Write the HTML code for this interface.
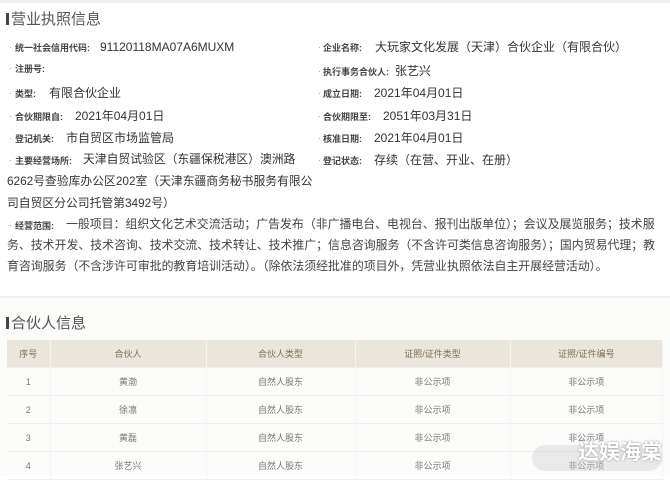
<!DOCTYPE html>
<html><head><meta charset="utf-8"><style>
body{margin:0;width:670px;height:474px;overflow:hidden;background:#fff;font-family:"Liberation Sans","Noto Sans CJK SC",sans-serif;color:#333;position:relative}
.a{position:absolute;white-space:nowrap;line-height:1}
.l{font-size:9px;font-weight:bold;color:#444}
.v{font-size:12px;color:#333}
.d{font-size:8px;color:#888}
.t{font-size:15px;color:#555}
.bar{display:inline-block;width:3px;height:12px;background:#444;margin-right:2px;vertical-align:-1px}
table{position:absolute;left:7px;top:340px;width:656px;border-collapse:collapse;font-size:9px;color:#777;table-layout:fixed}
td{text-align:center;border-right:1px solid #f4f4f4;border-bottom:1px solid #eee;height:27px;padding:0}
tr.h td{background:#ebe6db;color:#7a6f5e;height:27px}
.p{font-size:11.9px;color:#444}
</style></head><body>
<div style="position:absolute;left:0;top:0;width:670px;height:3px;background:#f1efe9"></div>
<div class="a t" style="left:6px;top:12px"><span class="bar"></span>营业执照信息</div>

<div class="a d" style="left:9px;top:44px">·</div><div class="a l" style="left:15px;top:44px">统一社会信用代码:</div><div class="a v" style="left:100px;top:41px">91120118MA07A6MUXM</div>
<div class="a d" style="left:9px;top:65px">·</div><div class="a l" style="left:15px;top:65px">注册号:</div>
<div class="a d" style="left:9px;top:90px">·</div><div class="a l" style="left:15px;top:90px">类型:</div><div class="a v" style="left:49px;top:87px">有限合伙企业</div>
<div class="a d" style="left:9px;top:113px">·</div><div class="a l" style="left:15px;top:113px">合伙期限自:</div><div class="a v" style="left:75px;top:110px">2021年04月01日</div>
<div class="a d" style="left:9px;top:135px">·</div><div class="a l" style="left:15px;top:135px">登记机关:</div><div class="a v" style="left:66px;top:132px">市自贸区市场监管局</div>
<div class="a d" style="left:9px;top:157px">·</div><div class="a l" style="left:15px;top:157px">主要经营场所:</div><div class="a v" style="left:83px;top:154px;font-size:11.8px">天津自贸试验区（东疆保税港区）澳洲路</div>
<div class="a v" style="left:7px;top:176px;font-size:11.8px">6262号查验库办公区202室（天津东疆商务秘书服务有限公</div>
<div class="a v" style="left:7px;top:198px;font-size:11.8px">司自贸区分公司托管第3492号）</div>

<div class="a d" style="left:318px;top:44px">·</div><div class="a l" style="left:323px;top:44px">企业名称:</div><div class="a v" style="left:375px;top:41px">大玩家文化发展（天津）合伙企业（有限合伙）</div>
<div class="a d" style="left:318px;top:68px">·</div><div class="a l" style="left:323px;top:68px">执行事务合伙人:</div><div class="a v" style="left:395px;top:65px">张艺兴</div>
<div class="a d" style="left:318px;top:90px">·</div><div class="a l" style="left:323px;top:90px">成立日期:</div><div class="a v" style="left:374px;top:87px">2021年04月01日</div>
<div class="a d" style="left:318px;top:113px">·</div><div class="a l" style="left:323px;top:113px">合伙期限至:</div><div class="a v" style="left:383px;top:110px">2051年03月31日</div>
<div class="a d" style="left:318px;top:135px">·</div><div class="a l" style="left:323px;top:135px">核准日期:</div><div class="a v" style="left:374px;top:132px">2021年04月01日</div>
<div class="a d" style="left:318px;top:157px">·</div><div class="a l" style="left:323px;top:157px">登记状态:</div><div class="a v" style="left:374px;top:154px">存续（在营、开业、在册）</div>

<div class="a d" style="left:9px;top:222px">·</div><div class="a l" style="left:15px;top:222px">经营范围:</div>
<div class="a p" style="left:66px;top:219px">一般项目：组织文化艺术交流活动；广告发布（非广播电台、电视台、报刊出版单位）；会议及展览服务；技术服</div>
<div class="a p" style="left:7px;top:240px">务、技术开发、技术咨询、技术交流、技术转让、技术推广；信息咨询服务（不含许可类信息咨询服务）；国内贸易代理；教</div>
<div class="a p" style="left:7px;top:261px">育咨询服务（不含涉许可审批的教育培训活动）。（除依法须经批准的项目外，凭营业执照依法自主开展经营活动）。</div>

<div style="position:absolute;left:0;top:296px;width:670px;height:178px;background:#fbfbfa;border-top:2px solid #f0efec"></div>
<div class="a t" style="left:6px;top:316px"><span class="bar"></span>合伙人信息</div>
<table>
<colgroup><col style="width:43px"><col style="width:156px"><col style="width:149px"><col style="width:155px"><col></colgroup>
<tr class="h"><td>序号</td><td>合伙人</td><td>合伙人类型</td><td>证照/证件类型</td><td>证照/证件编号</td></tr>
<tr><td>1</td><td>黄渤</td><td>自然人股东</td><td>非公示项</td><td>非公示项</td></tr>
<tr><td>2</td><td>徐凛</td><td>自然人股东</td><td>非公示项</td><td>非公示项</td></tr>
<tr><td>3</td><td>黄磊</td><td>自然人股东</td><td>非公示项</td><td>非公示项</td></tr>
<tr><td>4</td><td>张艺兴</td><td>自然人股东</td><td>非公示项</td><td>非公示项</td></tr>
</table>
<div style="position:absolute;left:532px;top:445px;width:130px;height:26px;border-radius:13px;background:rgba(200,200,200,.35)"></div>
<div class="a" style="left:578px;top:442px;font-size:21px;color:#fff;font-weight:bold;text-shadow:0 0 2px #888">达娱海棠</div>
</body></html>
